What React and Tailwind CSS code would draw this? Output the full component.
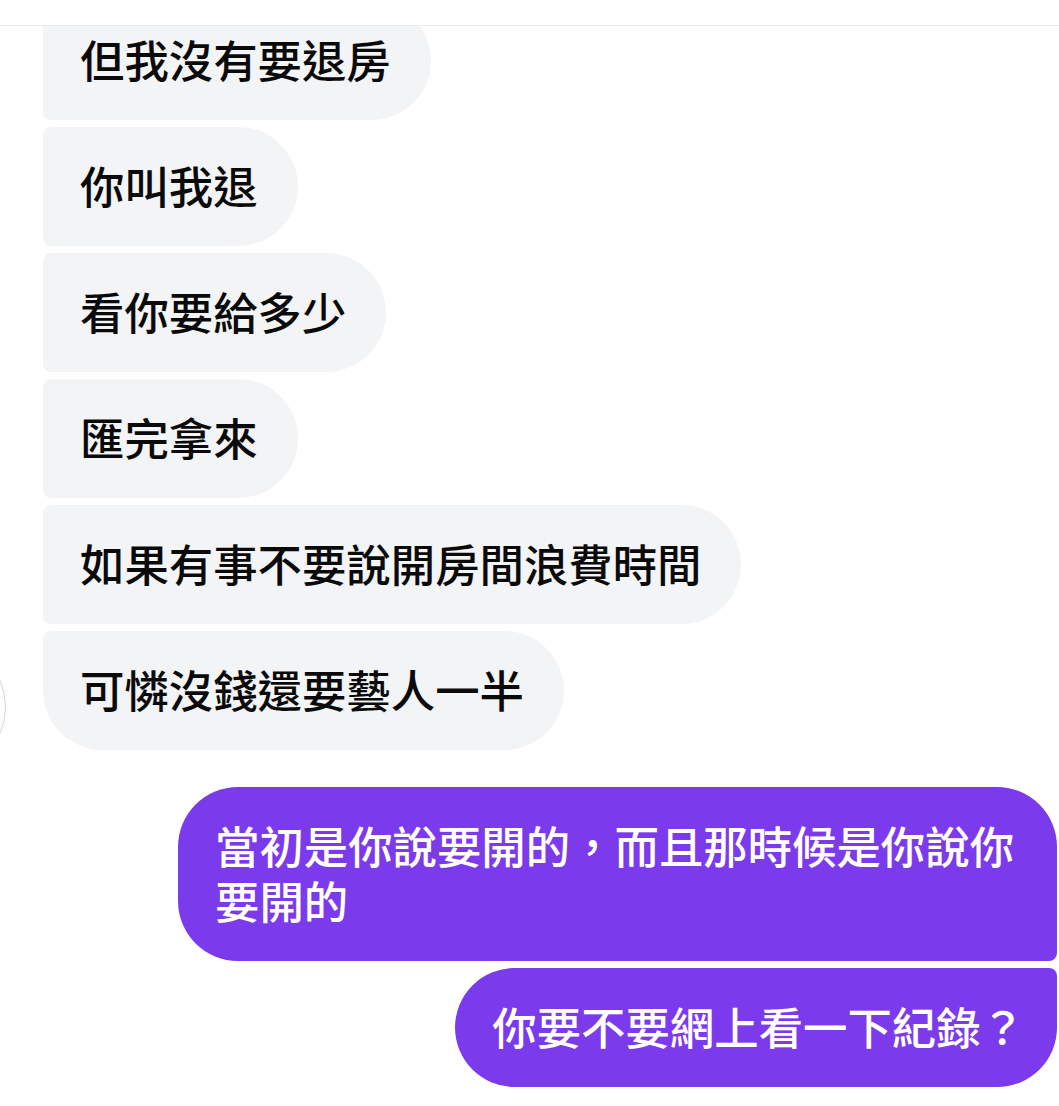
import React from 'react';
import clsx from 'clsx';

const FONT = '"Noto Sans CJK TC", "Noto Sans CJK SC", "Noto Sans", sans-serif';

const incoming = [
  '但我沒有要退房',
  '你叫我退',
  '看你要給多少',
  '匯完拿來',
  '如果有事不要說開房間浪費時間',
  '可憐沒錢還要藝人一半',
];

const outgoing = [
  '當初是你說要開的，而且那時候是你說你要開的',
  '你要不要網上看一下紀錄？',
];

function Bubble({ text, mine, first, last }) {
  return (
    <div
      className={clsx(
        'max-w-[879px] pl-[37px] pt-[30px] pb-[34px] text-[44.4px] leading-[55px] font-medium',
        mine ? 'bg-[#7c3aed] text-white' : 'bg-[#f3f4f6] text-[#0a0a0a]',
        mine && last ? 'pr-[32px]' : 'pr-[40px]',
        mine
          ? clsx('rounded-l-[60px]', first ? 'rounded-tr-[60px]' : 'rounded-tr-[8px]', last ? 'rounded-br-[60px]' : 'rounded-br-[8px]')
          : clsx('rounded-r-[60px]', first ? 'rounded-tl-[60px]' : 'rounded-tl-[8px]', last ? 'rounded-bl-[60px]' : 'rounded-bl-[8px]')
      )}
    >
      {text}
    </div>
  );
}

export default function App() {
  return (
    <div className="w-[1059px] h-[1106px] bg-white flex flex-col overflow-hidden" style={{ fontFamily: FONT }}>
      {/* Header strip */}
      <div className="h-[26px] shrink-0 bg-white border-b border-[#ebebeb] relative z-10" />

      {/* Messages */}
      <div className="flex-1 overflow-hidden">
        <div className="-mt-[25px] flex flex-col">
          <div className="relative flex flex-col items-start gap-[7px] pl-[43px]">
            {incoming.map((t, i) => (
              <Bubble key={i} text={t} first={false} last={i === incoming.length - 1} />
            ))}
            {/* partly hidden avatar */}
            <div className="absolute left-[-126px] bottom-[-23px] w-[132px] h-[132px] rounded-full border-[1.5px] border-[#d4d4d8]" />
          </div>

          <div className="mt-[37px] flex flex-col items-end gap-[7px] pr-[2px]">
            {outgoing.map((t, i) => (
              <Bubble key={i} text={t} mine first={i === 0} last={i === outgoing.length - 1} />
            ))}
          </div>
        </div>
      </div>
    </div>
  );
}
